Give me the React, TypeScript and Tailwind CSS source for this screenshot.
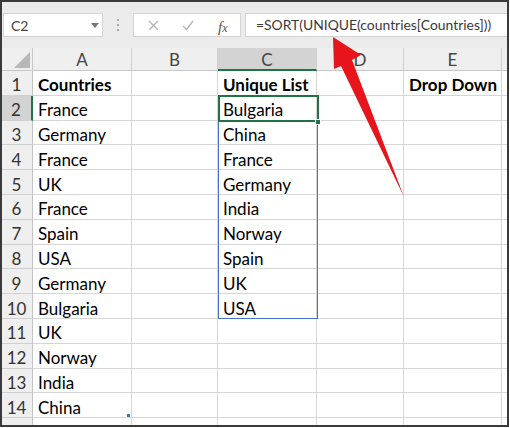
import React from "react";

const colA = ["Countries", "France", "Germany", "France", "UK", "France", "Spain", "USA", "Germany", "Bulgaria", "UK", "Norway", "India", "China"];
const colC = ["Unique List", "Bulgaria", "China", "France", "Germany", "India", "Norway", "Spain", "UK", "USA"];

const font = { fontFamily: "Lato, 'Open Sans', sans-serif" };

function Cell({ text, bold, extra }: { text?: string; bold?: boolean; extra?: string }) {
  return (
    <div className={"border-r border-b border-[#d6d6d6] bg-white flex items-center pl-[5px] pt-[4px] text-[17px] leading-none text-black whitespace-nowrap overflow-visible " + (bold ? "font-bold " : "") + (extra || "")}>
      {text}
    </div>
  );
}

export default function App() {
  const rows = Array.from({ length: 14 }, (_, i) => i);
  return (
    <div className="relative w-[510px] h-[428px] bg-white" style={font}>
      <div className="w-[509px] h-[427px] border-2 border-[#3a3a3a] flex flex-col overflow-hidden bg-[#ebebeb]">
        {/* toolbar */}
        <div className="h-[46px] flex items-start shrink-0">
          <div className="ml-[1px] mt-[11px] w-[100px] h-[24px] bg-white border border-[#d4d4d4] flex items-center pl-[7px] text-[14px] text-[#444] relative">
            C2
            <div className="absolute left-[87px] top-[9px] w-0 h-0 border-l-[4px] border-r-[4px] border-t-[5px] border-l-transparent border-r-transparent border-t-[#777]"></div>
          </div>
          <div className="ml-[14px] mt-[17px] flex flex-col gap-[3px]">
            <div className="w-[2px] h-[2px] bg-[#aaa]"></div>
            <div className="w-[2px] h-[2px] bg-[#aaa]"></div>
            <div className="w-[2px] h-[2px] bg-[#aaa]"></div>
          </div>
          <div className="ml-[14px] mt-[11px] w-[108px] h-[24px] bg-white border border-[#d4d4d4] flex items-center relative">
            <svg className="absolute left-[14px] top-[6px]" width="11" height="11" viewBox="0 0 11 11">
              <path d="M1 1 L10 10 M10 1 L1 10" stroke="#b5b5b5" strokeWidth="1.3" fill="none" />
            </svg>
            <svg className="absolute left-[48px] top-[6px]" width="12" height="11" viewBox="0 0 12 11">
              <path d="M1 6 L4.5 9.5 L11 1" stroke="#b5b5b5" strokeWidth="1.4" fill="none" />
            </svg>
            <span className="absolute left-[84px] top-[2px] text-[15px] italic text-[#555]" style={{ fontFamily: "'Liberation Serif', serif" }}>
              f<span className="text-[12px]">x</span>
            </span>
          </div>
          <div className="ml-[4px] mt-[11px] flex-1 h-[24px] bg-white border-y border-l border-[#d4d4d4] flex items-center pl-[10px] pt-[1px] text-[13.9px] text-[#3a3a3a] whitespace-nowrap">
            =SORT(UNIQUE(countries[Countries]))
          </div>
        </div>
        {/* sheet grid */}
        <div
          className="relative grid flex-1 bg-white"
          style={{
            gridTemplateColumns: "31px 99px 86px 99px 87px 98px 1fr",
            gridTemplateRows: "23px repeat(14, 24.8px) 1fr",
          }}
        >
          {/* header row */}
          <div className="bg-[#efefef] border-r border-b border-[#c8c8c8] relative">
            <svg className="absolute left-[12px] top-[4px]" width="16" height="16" viewBox="0 0 16 16">
              <path d="M16 0 L16 16 L0 16 Z" fill="#b8b8b8" />
            </svg>
          </div>
          {["A", "B", "C", "D", "E"].map((l) => (
            <div
              key={l}
              className={
                "flex items-center justify-center pt-[1px] text-[17px] leading-none text-[#444] border-r border-[#cfcfcf] " +
                (l === "C" ? "bg-[#d3d3d3] border-b-2 border-b-[#217346]" : "bg-[#efefef] border-b border-b-[#c8c8c8]")
              }
            >
              {l}
            </div>
          ))}
          <div className="bg-[#efefef] border-b border-[#c8c8c8]"></div>

          {rows.map((r) => (
            <React.Fragment key={r}>
              <div
                className={
                  "flex items-center justify-center pt-[4px] pr-[1px] text-[17px] leading-none text-[#333] border-b border-[#d0d0d0] " +
                  (r === 1 ? "bg-[#d3d3d3] border-r-2 border-r-[#217346]" : "bg-[#efefef] border-r border-r-[#c4c4c4]")
                }
              >
                {r + 1}
              </div>
              <Cell text={colA[r]} bold={r === 0} />
              <Cell />
              <Cell text={colC[r]} bold={r === 0} />
              <Cell />
              <Cell text={r === 0 ? "Drop Down" : undefined} bold extra="pl-[3px]" />
              <Cell />
            </React.Fragment>
          ))}
          {/* partial row 15 */}
          <div className="bg-[#efefef] border-r border-[#c4c4c4]"></div>
          <div className="border-r border-[#d6d6d6]"></div>
          <div className="border-r border-[#d6d6d6]"></div>
          <div className="border-r border-[#d6d6d6]"></div>
          <div className="border-r border-[#d6d6d6]"></div>
          <div className="border-r border-[#d6d6d6]"></div>
          <div></div>

          {/* spill range */}
          <div className="absolute left-[216px] top-[47px] w-[100px] h-[224px] border border-[#4472c4] pointer-events-none"></div>
          {/* active cell */}
          <div className="absolute left-[216px] top-[47px] w-[101px] h-[27px] border-2 border-[#217346] pointer-events-none"></div>
          <div className="absolute left-[313px] top-[71px] w-[6px] h-[6px] bg-[#217346] border border-white pointer-events-none"></div>
          {/* table resize handle */}
          <div className="absolute left-[125px] top-[366px] w-[3px] h-[3px] bg-[#4a6fb0] pointer-events-none"></div>
        </div>
      </div>
      {/* red arrow */}
      <svg className="absolute left-0 top-0 pointer-events-none" width="510" height="428" viewBox="0 0 510 428">
        <polygon points="333,37 361,55 352,60 404,197 341,66 334,69" fill="#e8141b" />
      </svg>
    </div>
  );
}
